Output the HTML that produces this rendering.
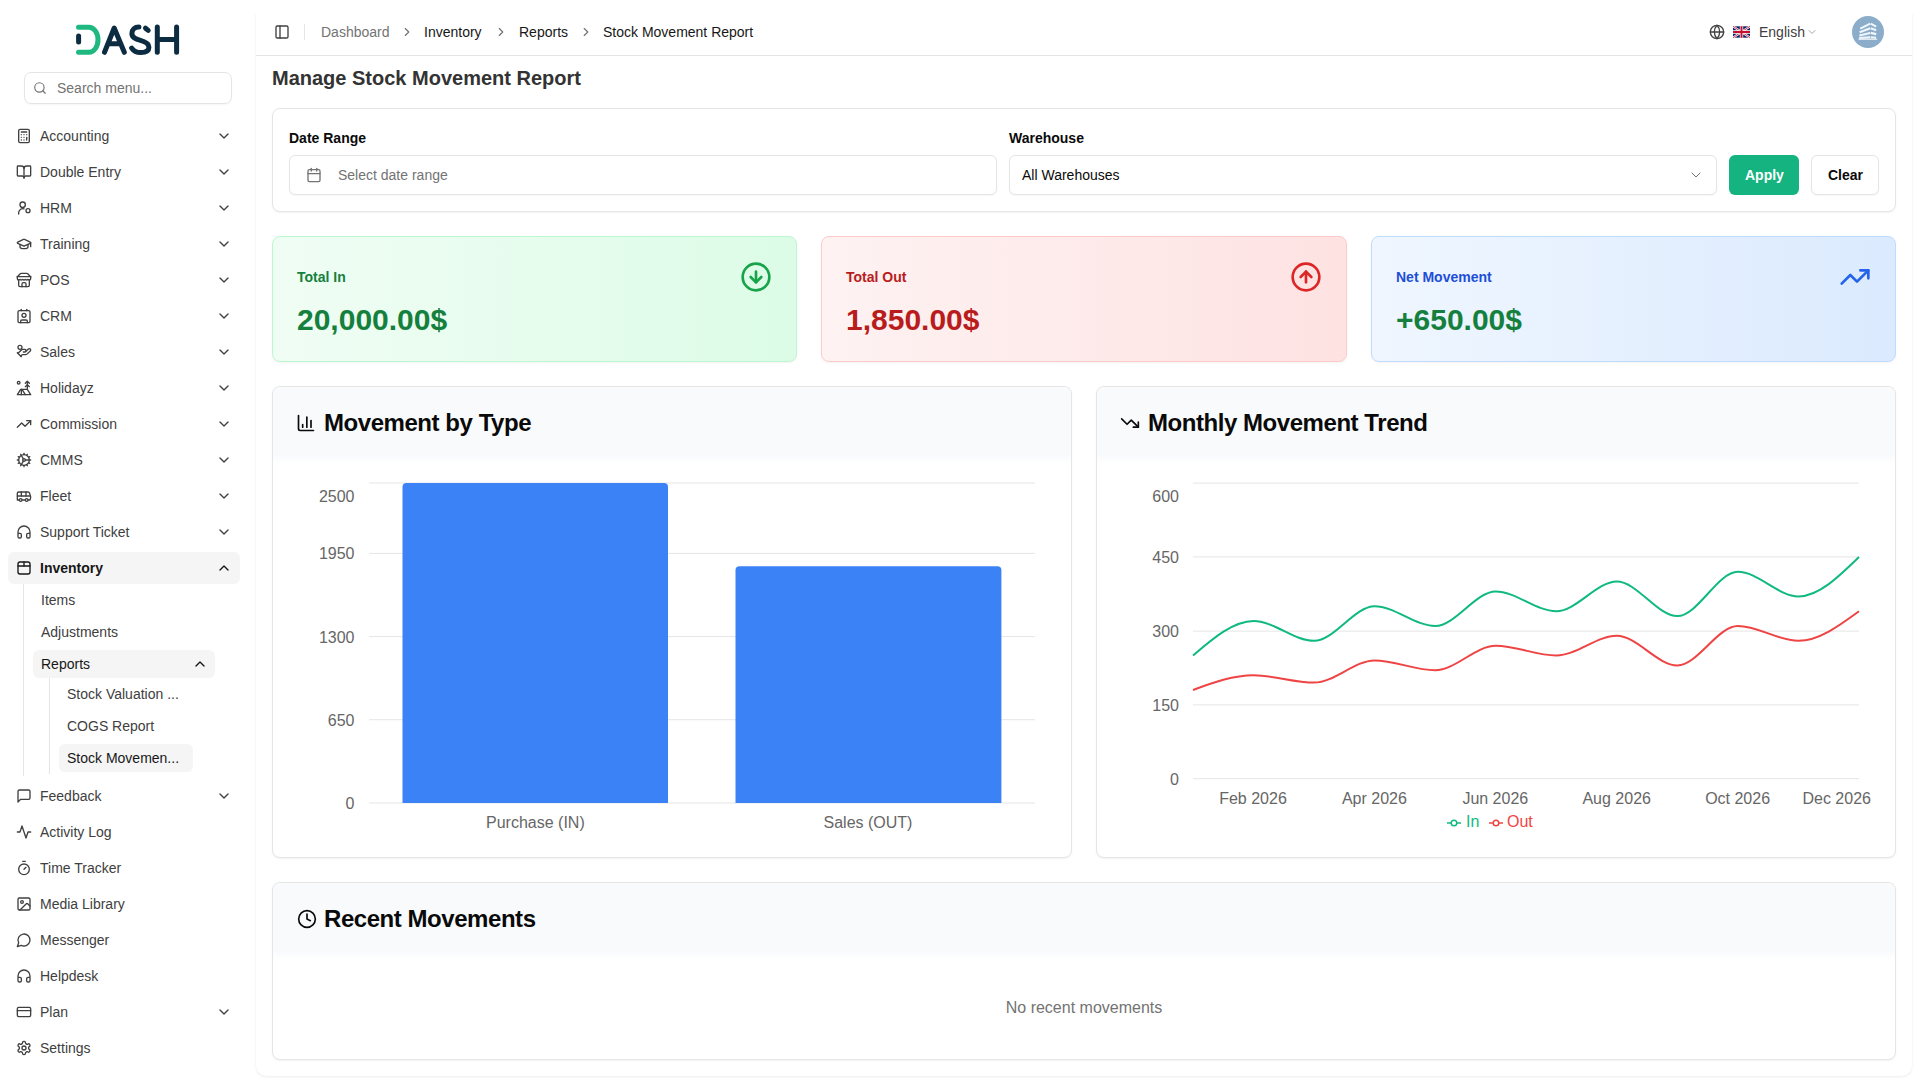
<!DOCTYPE html><html><head><meta charset="utf-8"><style>
*{box-sizing:border-box;margin:0;padding:0}
html,body{width:1920px;height:1080px;overflow:hidden;background:#fff;font-family:"Liberation Sans",sans-serif;color:#0a0a0a}
.abs{position:absolute}
svg{display:block;overflow:visible}
.tx{position:absolute;white-space:nowrap;line-height:1}
.card{position:absolute;border:1px solid #e5e5e5;border-radius:8px;background:#fff;box-shadow:0 1px 2px rgba(0,0,0,.05)}
</style></head><body>
<div class="abs" style="left:0;top:0;width:256px;height:1080px;background:#fff">
<svg class="abs" style="left:70px;top:20px" width="116" height="40" viewBox="70 20 116 40">
<path d="M78.5 27.2 H89 A9 12.55 0 0 1 89 52.3 H78.5" fill="none" stroke="#1fb881" stroke-width="5" stroke-linecap="round"/>
<path d="M78.6 36 V42" fill="none" stroke="#0c2c41" stroke-width="5" stroke-linecap="round"/>
<path d="M104.5 52.3 L114.2 28 L124.3 52.3 M108.2 43.8 H120.8" fill="none" stroke="#0c2c41" stroke-width="5" stroke-linecap="round" stroke-linejoin="round"/>
<g transform="translate(1.3 0)"><path d="M137.6 27.1 C133.3 27.1 130.6 29.7 130.6 33.4 C130.6 37.6 134.3 39 139.2 40.4 C144.6 41.9 147.6 43.8 147.6 47.3 C147.6 51 144.2 52.6 139.4 52.6 C135.3 52.6 132.3 51 130.4 48.1" fill="none" stroke="#0c2c41" stroke-width="5" stroke-linecap="round"/><path d="M144.2 28.2 L146.9 30.4" fill="none" stroke="#0c2c41" stroke-width="5" stroke-linecap="round"/></g>
<path d="M157.3 27 V52.3 M176.6 27 V52.3 M157.3 39.6 H176.6" fill="none" stroke="#0c2c41" stroke-width="5" stroke-linecap="round"/>
</svg>
<div class="abs" style="left:24px;top:72px;width:208px;height:32px;border:1px solid #e5e5e5;border-radius:7px;box-shadow:0 1px 2px rgba(0,0,0,.04)"></div>
<svg class="abs" style="left:33px;top:81px" width="14" height="14" viewBox="0 0 24 24" fill="none" stroke="#737373" stroke-width="2" stroke-linecap="round" stroke-linejoin="round" ><circle cx="11" cy="11" r="8"/><path d="m21 21-4.3-4.3"/></svg>
<div class="tx" style="left:57px;top:81px;font-size:14px;color:#737373">Search menu...</div>
<svg class="abs" style="left:16px;top:128px" width="16" height="16" viewBox="0 0 24 24" fill="none" stroke="#404040" stroke-width="2" stroke-linecap="round" stroke-linejoin="round" ><rect width="16" height="20" x="4" y="2" rx="2"/><line x1="8" x2="16" y1="6" y2="6"/><line x1="16" x2="16" y1="14" y2="18"/><path d="M16 10h.01"/><path d="M12 10h.01"/><path d="M8 10h.01"/><path d="M12 14h.01"/><path d="M8 14h.01"/><path d="M12 18h.01"/><path d="M8 18h.01"/></svg>
<div class="tx" style="left:40px;top:129px;font-size:14px;color:#404040">Accounting</div>
<svg class="abs" style="left:216px;top:128px" width="16" height="16" viewBox="0 0 24 24" fill="none" stroke="#404040" stroke-width="2" stroke-linecap="round" stroke-linejoin="round" ><path d="m6 9 6 6 6-6"/></svg>
<svg class="abs" style="left:16px;top:164px" width="16" height="16" viewBox="0 0 24 24" fill="none" stroke="#404040" stroke-width="2" stroke-linecap="round" stroke-linejoin="round" ><path d="M12 7v14"/><path d="M3 18a1 1 0 0 1-1-1V4a1 1 0 0 1 1-1h5a4 4 0 0 1 4 4 4 4 0 0 1 4-4h5a1 1 0 0 1 1 1v13a1 1 0 0 1-1 1h-6a3 3 0 0 0-3 3 3 3 0 0 0-3-3z"/></svg>
<div class="tx" style="left:40px;top:165px;font-size:14px;color:#404040">Double Entry</div>
<svg class="abs" style="left:216px;top:164px" width="16" height="16" viewBox="0 0 24 24" fill="none" stroke="#404040" stroke-width="2" stroke-linecap="round" stroke-linejoin="round" ><path d="m6 9 6 6 6-6"/></svg>
<svg class="abs" style="left:16px;top:200px" width="16" height="16" viewBox="0 0 24 24" fill="none" stroke="#404040" stroke-width="2" stroke-linecap="round" stroke-linejoin="round" ><circle cx="10" cy="7" r="4"/><path d="M4 21v-2a6 6 0 0 1 8-5.6"/><circle cx="18" cy="16" r="3"/></svg>
<div class="tx" style="left:40px;top:201px;font-size:14px;color:#404040">HRM</div>
<svg class="abs" style="left:216px;top:200px" width="16" height="16" viewBox="0 0 24 24" fill="none" stroke="#404040" stroke-width="2" stroke-linecap="round" stroke-linejoin="round" ><path d="m6 9 6 6 6-6"/></svg>
<svg class="abs" style="left:16px;top:236px" width="16" height="16" viewBox="0 0 24 24" fill="none" stroke="#404040" stroke-width="2" stroke-linecap="round" stroke-linejoin="round" ><path d="M21.42 10.922a1 1 0 0 0-.019-1.838L12.83 5.18a2 2 0 0 0-1.66 0L2.6 9.08a1 1 0 0 0 0 1.832l8.57 3.908a2 2 0 0 0 1.66 0z"/><path d="M22 10v6"/><path d="M6 12.5V16a6 3 0 0 0 12 0v-3.5"/></svg>
<div class="tx" style="left:40px;top:237px;font-size:14px;color:#404040">Training</div>
<svg class="abs" style="left:216px;top:236px" width="16" height="16" viewBox="0 0 24 24" fill="none" stroke="#404040" stroke-width="2" stroke-linecap="round" stroke-linejoin="round" ><path d="m6 9 6 6 6-6"/></svg>
<svg class="abs" style="left:16px;top:272px" width="16" height="16" viewBox="0 0 24 24" fill="none" stroke="#404040" stroke-width="2" stroke-linecap="round" stroke-linejoin="round" ><path d="m2 7 4.41-4.41A2 2 0 0 1 7.83 2h8.34a2 2 0 0 1 1.42.59L22 7"/><path d="M4 12v8a2 2 0 0 0 2 2h12a2 2 0 0 0 2-2v-8"/><path d="M15 22v-4a2 2 0 0 0-2-2h-2a2 2 0 0 0-2 2v4"/><path d="M2 7h20"/><path d="M22 7v3a2 2 0 0 1-2 2a2.7 2.7 0 0 1-1.59-.63.7.7 0 0 0-.82 0A2.7 2.7 0 0 1 16 12a2.7 2.7 0 0 1-1.59-.63.7.7 0 0 0-.82 0A2.7 2.7 0 0 1 12 12a2.7 2.7 0 0 1-1.59-.63.7.7 0 0 0-.82 0A2.7 2.7 0 0 1 8 12a2.7 2.7 0 0 1-1.59-.63.7.7 0 0 0-.82 0A2.7 2.7 0 0 1 4 12a2 2 0 0 1-2-2V7"/></svg>
<div class="tx" style="left:40px;top:273px;font-size:14px;color:#404040">POS</div>
<svg class="abs" style="left:216px;top:272px" width="16" height="16" viewBox="0 0 24 24" fill="none" stroke="#404040" stroke-width="2" stroke-linecap="round" stroke-linejoin="round" ><path d="m6 9 6 6 6-6"/></svg>
<svg class="abs" style="left:16px;top:308px" width="16" height="16" viewBox="0 0 24 24" fill="none" stroke="#404040" stroke-width="2" stroke-linecap="round" stroke-linejoin="round" ><path d="M16 2v2"/><path d="M7 22v-2a2 2 0 0 1 2-2h6a2 2 0 0 1 2 2v2"/><path d="M8 2v2"/><circle cx="12" cy="11" r="3"/><rect x="3" y="4" width="18" height="18" rx="2"/></svg>
<div class="tx" style="left:40px;top:309px;font-size:14px;color:#404040">CRM</div>
<svg class="abs" style="left:216px;top:308px" width="16" height="16" viewBox="0 0 24 24" fill="none" stroke="#404040" stroke-width="2" stroke-linecap="round" stroke-linejoin="round" ><path d="m6 9 6 6 6-6"/></svg>
<svg class="abs" style="left:16px;top:344px" width="16" height="16" viewBox="0 0 24 24" fill="none" stroke="#404040" stroke-width="2" stroke-linecap="round" stroke-linejoin="round" ><circle cx="6" cy="5" r="3"/><path d="M11 12h2a2 2 0 1 0 0-4h-3c-.6 0-1.1.2-1.4.6L3 14"/><path d="m7 18 1.6-1.4c.3-.4.8-.6 1.4-.6h4c1.1 0 2.1-.4 2.8-1.2l4.6-4.4a2 2 0 0 0-2.75-2.91l-4.2 3.9"/><path d="m2 13 6 6"/></svg>
<div class="tx" style="left:40px;top:345px;font-size:14px;color:#404040">Sales</div>
<svg class="abs" style="left:216px;top:344px" width="16" height="16" viewBox="0 0 24 24" fill="none" stroke="#404040" stroke-width="2" stroke-linecap="round" stroke-linejoin="round" ><path d="m6 9 6 6 6-6"/></svg>
<svg class="abs" style="left:16px;top:380px" width="16" height="16" viewBox="0 0 24 24" fill="none" stroke="#404040" stroke-width="2" stroke-linecap="round" stroke-linejoin="round" ><circle cx="4" cy="4" r="2"/><path d="m14 5 3-3 3 3"/><path d="m14 10 3-3 3 3"/><path d="M17 14V2"/><path d="M17 14H7l-5 8h20Z"/><path d="M8 14v8"/><path d="m9 14 5 8"/></svg>
<div class="tx" style="left:40px;top:381px;font-size:14px;color:#404040">Holidayz</div>
<svg class="abs" style="left:216px;top:380px" width="16" height="16" viewBox="0 0 24 24" fill="none" stroke="#404040" stroke-width="2" stroke-linecap="round" stroke-linejoin="round" ><path d="m6 9 6 6 6-6"/></svg>
<svg class="abs" style="left:16px;top:416px" width="16" height="16" viewBox="0 0 24 24" fill="none" stroke="#404040" stroke-width="2" stroke-linecap="round" stroke-linejoin="round" ><polyline points="22 7 13.5 15.5 8.5 10.5 2 17"/><polyline points="16 7 22 7 22 13"/></svg>
<div class="tx" style="left:40px;top:417px;font-size:14px;color:#404040">Commission</div>
<svg class="abs" style="left:216px;top:416px" width="16" height="16" viewBox="0 0 24 24" fill="none" stroke="#404040" stroke-width="2" stroke-linecap="round" stroke-linejoin="round" ><path d="m6 9 6 6 6-6"/></svg>
<svg class="abs" style="left:16px;top:452px" width="16" height="16" viewBox="0 0 24 24" fill="none" stroke="#404040" stroke-width="2" stroke-linecap="round" stroke-linejoin="round" ><path d="M12 20a8 8 0 1 0 0-16 8 8 0 0 0 0 16Z"/><path d="M12 14a2 2 0 1 0 0-4 2 2 0 0 0 0 4Z"/><path d="M12 2v2"/><path d="M12 22v-2"/><path d="m17 20.66-1-1.73"/><path d="M11 10.27 7 3.34"/><path d="m20.66 17-1.73-1"/><path d="m3.34 7 1.73 1"/><path d="M14 12h8"/><path d="M2 12h2"/><path d="m20.66 7-1.73 1"/><path d="m3.34 17 1.73-1"/><path d="m17 3.34-1 1.73"/><path d="m11 13.73-4 6.93"/></svg>
<div class="tx" style="left:40px;top:453px;font-size:14px;color:#404040">CMMS</div>
<svg class="abs" style="left:216px;top:452px" width="16" height="16" viewBox="0 0 24 24" fill="none" stroke="#404040" stroke-width="2" stroke-linecap="round" stroke-linejoin="round" ><path d="m6 9 6 6 6-6"/></svg>
<svg class="abs" style="left:16px;top:488px" width="16" height="16" viewBox="0 0 24 24" fill="none" stroke="#404040" stroke-width="2" stroke-linecap="round" stroke-linejoin="round" ><path d="M8 6v6"/><path d="M15 6v6"/><path d="M2 12h19.6"/><path d="M18 18h3s.5-1.7.8-2.8c.1-.4.2-.8.2-1.2 0-.4-.1-.8-.2-1.2l-1.4-5C20.1 6.8 19.1 6 18 6H4a2 2 0 0 0-2 2v10h3"/><circle cx="7" cy="18" r="2"/><path d="M9 18h5"/><circle cx="16" cy="18" r="2"/></svg>
<div class="tx" style="left:40px;top:489px;font-size:14px;color:#404040">Fleet</div>
<svg class="abs" style="left:216px;top:488px" width="16" height="16" viewBox="0 0 24 24" fill="none" stroke="#404040" stroke-width="2" stroke-linecap="round" stroke-linejoin="round" ><path d="m6 9 6 6 6-6"/></svg>
<svg class="abs" style="left:16px;top:524px" width="16" height="16" viewBox="0 0 24 24" fill="none" stroke="#404040" stroke-width="2" stroke-linecap="round" stroke-linejoin="round" ><path d="M3 14h3a2 2 0 0 1 2 2v3a2 2 0 0 1-2 2H5a2 2 0 0 1-2-2v-7a9 9 0 0 1 18 0v7a2 2 0 0 1-2 2h-1a2 2 0 0 1-2-2v-3a2 2 0 0 1 2-2h3"/></svg>
<div class="tx" style="left:40px;top:525px;font-size:14px;color:#404040">Support Ticket</div>
<svg class="abs" style="left:216px;top:524px" width="16" height="16" viewBox="0 0 24 24" fill="none" stroke="#404040" stroke-width="2" stroke-linecap="round" stroke-linejoin="round" ><path d="m6 9 6 6 6-6"/></svg>
<div class="abs" style="left:8px;top:552px;width:232px;height:32px;background:#f5f5f5;border-radius:6px"></div>
<svg class="abs" style="left:16px;top:560px" width="16" height="16" viewBox="0 0 24 24" fill="none" stroke="#171717" stroke-width="2" stroke-linecap="round" stroke-linejoin="round" ><rect x="3" y="3" width="18" height="18" rx="3"/><path d="M3 9h18"/><path d="M12 3v6"/></svg>
<div class="tx" style="left:40px;top:561px;font-size:14px;font-weight:700;color:#171717">Inventory</div>
<svg class="abs" style="left:216px;top:560px" width="16" height="16" viewBox="0 0 24 24" fill="none" stroke="#171717" stroke-width="2" stroke-linecap="round" stroke-linejoin="round" ><path d="m18 15-6-6-6 6"/></svg>
<div class="abs" style="left:23px;top:584px;width:1px;height:192px;background:#e5e5e5"></div>
<div class="tx" style="left:41px;top:593px;font-size:14px;color:#404040">Items</div>
<div class="tx" style="left:41px;top:625px;font-size:14px;color:#404040">Adjustments</div>
<div class="abs" style="left:33px;top:650px;width:182px;height:28px;background:#f5f5f5;border-radius:6px"></div>
<div class="tx" style="left:41px;top:657px;font-size:14px;color:#171717">Reports</div>
<svg class="abs" style="left:192px;top:656px" width="16" height="16" viewBox="0 0 24 24" fill="none" stroke="#171717" stroke-width="2" stroke-linecap="round" stroke-linejoin="round" ><path d="m18 15-6-6-6 6"/></svg>
<div class="abs" style="left:49px;top:678px;width:1px;height:96px;background:#e5e5e5"></div>
<div class="tx" style="left:67px;top:687px;font-size:14px;color:#404040">Stock Valuation ...</div>
<div class="tx" style="left:67px;top:719px;font-size:14px;color:#404040">COGS Report</div>
<div class="abs" style="left:59px;top:744px;width:134px;height:28px;background:#f5f5f5;border-radius:6px"></div>
<div class="tx" style="left:67px;top:751px;font-size:14px;color:#171717">Stock Movemen...</div>
<svg class="abs" style="left:16px;top:788px" width="16" height="16" viewBox="0 0 24 24" fill="none" stroke="#404040" stroke-width="2" stroke-linecap="round" stroke-linejoin="round" ><path d="M21 15a2 2 0 0 1-2 2H7l-4 4V5a2 2 0 0 1 2-2h14a2 2 0 0 1 2 2z"/></svg>
<div class="tx" style="left:40px;top:789px;font-size:14px;color:#404040">Feedback</div>
<svg class="abs" style="left:216px;top:788px" width="16" height="16" viewBox="0 0 24 24" fill="none" stroke="#404040" stroke-width="2" stroke-linecap="round" stroke-linejoin="round" ><path d="m6 9 6 6 6-6"/></svg>
<svg class="abs" style="left:16px;top:824px" width="16" height="16" viewBox="0 0 24 24" fill="none" stroke="#404040" stroke-width="2" stroke-linecap="round" stroke-linejoin="round" ><path d="M22 12h-4l-3 9L9 3l-3 9H2"/></svg>
<div class="tx" style="left:40px;top:825px;font-size:14px;color:#404040">Activity Log</div>
<svg class="abs" style="left:16px;top:860px" width="16" height="16" viewBox="0 0 24 24" fill="none" stroke="#404040" stroke-width="2" stroke-linecap="round" stroke-linejoin="round" ><line x1="10" x2="14" y1="2" y2="2"/><line x1="12" x2="15" y1="14" y2="11"/><circle cx="12" cy="14" r="8"/></svg>
<div class="tx" style="left:40px;top:861px;font-size:14px;color:#404040">Time Tracker</div>
<svg class="abs" style="left:16px;top:896px" width="16" height="16" viewBox="0 0 24 24" fill="none" stroke="#404040" stroke-width="2" stroke-linecap="round" stroke-linejoin="round" ><rect width="18" height="18" x="3" y="3" rx="2" ry="2"/><circle cx="9" cy="9" r="2"/><path d="m21 15-3.086-3.086a2 2 0 0 0-2.828 0L6 21"/></svg>
<div class="tx" style="left:40px;top:897px;font-size:14px;color:#404040">Media Library</div>
<svg class="abs" style="left:16px;top:932px" width="16" height="16" viewBox="0 0 24 24" fill="none" stroke="#404040" stroke-width="2" stroke-linecap="round" stroke-linejoin="round" ><path d="M7.9 20A9 9 0 1 0 4 16.1L2 22Z"/></svg>
<div class="tx" style="left:40px;top:933px;font-size:14px;color:#404040">Messenger</div>
<svg class="abs" style="left:16px;top:968px" width="16" height="16" viewBox="0 0 24 24" fill="none" stroke="#404040" stroke-width="2" stroke-linecap="round" stroke-linejoin="round" ><path d="M3 14h3a2 2 0 0 1 2 2v3a2 2 0 0 1-2 2H5a2 2 0 0 1-2-2v-7a9 9 0 0 1 18 0v7a2 2 0 0 1-2 2h-1a2 2 0 0 1-2-2v-3a2 2 0 0 1 2-2h3"/></svg>
<div class="tx" style="left:40px;top:969px;font-size:14px;color:#404040">Helpdesk</div>
<svg class="abs" style="left:16px;top:1004px" width="16" height="16" viewBox="0 0 24 24" fill="none" stroke="#404040" stroke-width="2" stroke-linecap="round" stroke-linejoin="round" ><rect width="20" height="14" x="2" y="5" rx="2"/><line x1="2" x2="22" y1="10" y2="10"/></svg>
<div class="tx" style="left:40px;top:1005px;font-size:14px;color:#404040">Plan</div>
<svg class="abs" style="left:216px;top:1004px" width="16" height="16" viewBox="0 0 24 24" fill="none" stroke="#404040" stroke-width="2" stroke-linecap="round" stroke-linejoin="round" ><path d="m6 9 6 6 6-6"/></svg>
<svg class="abs" style="left:16px;top:1040px" width="16" height="16" viewBox="0 0 24 24" fill="none" stroke="#404040" stroke-width="2" stroke-linecap="round" stroke-linejoin="round" ><path d="M12.22 2h-.44a2 2 0 0 0-2 2v.18a2 2 0 0 1-1 1.73l-.43.25a2 2 0 0 1-2 0l-.15-.08a2 2 0 0 0-2.73.73l-.22.38a2 2 0 0 0 .73 2.73l.15.1a2 2 0 0 1 1 1.72v.51a2 2 0 0 1-1 1.74l-.15.09a2 2 0 0 0-.73 2.73l.22.38a2 2 0 0 0 2.73.73l.15-.08a2 2 0 0 1 2 0l.43.25a2 2 0 0 1 1 1.73V20a2 2 0 0 0 2 2h.44a2 2 0 0 0 2-2v-.18a2 2 0 0 1 1-1.73l.43-.25a2 2 0 0 1 2 0l.15.08a2 2 0 0 0 2.73-.73l.22-.39a2 2 0 0 0-.73-2.73l-.15-.08a2 2 0 0 1-1-1.74v-.5a2 2 0 0 1 1-1.74l.15-.09a2 2 0 0 0 .73-2.73l-.22-.38a2 2 0 0 0-2.73-.73l-.15.08a2 2 0 0 1-2 0l-.43-.25a2 2 0 0 1-1-1.73V4a2 2 0 0 0-2-2z"/><circle cx="12" cy="12" r="3"/></svg>
<div class="tx" style="left:40px;top:1041px;font-size:14px;color:#404040">Settings</div>
</div>
<div class="abs" style="left:256px;top:13px;width:1656px;height:1063px;background:#fff;border-radius:0 0 10px 10px;box-shadow:0 1px 3px rgba(0,0,0,.07),0 0 1px rgba(0,0,0,.06)"></div>
<div class="abs" style="left:248px;top:0px;width:1672px;height:13px;background:#fff"></div>
<div class="abs" style="left:256px;top:55px;width:1656px;height:1px;background:#e5e5e5"></div>
<svg class="abs" style="left:274px;top:24px" width="16" height="16" viewBox="0 0 24 24" fill="none" stroke="#404040" stroke-width="2" stroke-linecap="round" stroke-linejoin="round" ><rect width="18" height="18" x="3" y="3" rx="2"/><path d="M9 3v18"/></svg>
<div class="abs" style="left:304px;top:24px;width:1px;height:16px;background:#e5e5e5"></div>
<div class="tx" style="left:321px;top:25px;font-size:14px;color:#737373">Dashboard</div>
<svg class="abs" style="left:400px;top:25px" width="14" height="14" viewBox="0 0 24 24" fill="none" stroke="#737373" stroke-width="2" stroke-linecap="round" stroke-linejoin="round" ><path d="m9 18 6-6-6-6"/></svg>
<div class="tx" style="left:424px;top:25px;font-size:14px;color:#171717">Inventory</div>
<svg class="abs" style="left:494px;top:25px" width="14" height="14" viewBox="0 0 24 24" fill="none" stroke="#737373" stroke-width="2" stroke-linecap="round" stroke-linejoin="round" ><path d="m9 18 6-6-6-6"/></svg>
<div class="tx" style="left:519px;top:25px;font-size:14px;color:#171717">Reports</div>
<svg class="abs" style="left:579px;top:25px" width="14" height="14" viewBox="0 0 24 24" fill="none" stroke="#737373" stroke-width="2" stroke-linecap="round" stroke-linejoin="round" ><path d="m9 18 6-6-6-6"/></svg>
<div class="tx" style="left:603px;top:25px;font-size:14px;color:#171717">Stock Movement Report</div>
<svg class="abs" style="left:1709px;top:24px" width="16" height="16" viewBox="0 0 24 24" fill="none" stroke="#404040" stroke-width="2" stroke-linecap="round" stroke-linejoin="round" ><circle cx="12" cy="12" r="10"/><path d="M12 2a14.5 14.5 0 0 0 0 20 14.5 14.5 0 0 0 0-20"/><path d="M2 12h20"/></svg>
<svg class="abs" style="left:1733px;top:26px" width="17" height="12" viewBox="0 0 60 40">
<rect width="60" height="40" fill="#012169"/>
<path d="M0 0 L60 40 M60 0 L0 40" stroke="#fff" stroke-width="8"/>
<path d="M0 0 L60 40 M60 0 L0 40" stroke="#C8102E" stroke-width="3"/>
<path d="M30 0 V40 M0 20 H60" stroke="#fff" stroke-width="12"/>
<path d="M30 0 V40 M0 20 H60" stroke="#C8102E" stroke-width="7"/>
</svg>
<div class="tx" style="left:1759px;top:25px;font-size:14px;color:#404040">English</div>
<svg class="abs" style="left:1806px;top:26px" width="12" height="12" viewBox="0 0 24 24" fill="none" stroke="#a3a3a3" stroke-width="2" stroke-linecap="round" stroke-linejoin="round" ><path d="m6 9 6 6 6-6"/></svg>
<div class="abs" style="left:1852px;top:16px;width:32px;height:32px;border-radius:50%;background:#8badc9;overflow:hidden">
<svg class="abs" style="left:0;top:0" width="32" height="32" viewBox="0 0 32 32" stroke="#eef6fb" stroke-linecap="butt" fill="none">
<path d="M8.2 12.6 L18.2 7.6 M7.6 16.2 L18.2 12.2 M7.3 19.4 L18.2 16.9 M7.2 22 L18.2 21.4" stroke-width="2.1"/>
<path d="M18.7 7.6 L24.2 10.6 M18.7 12.2 L24.2 14.3 M18.7 16.9 L24.2 18.1 M18.7 21.4 L24.2 21.7" stroke-width="2.1"/>
<path d="M6.5 23.3 H25.2" stroke-width="1"/>
</svg></div>
<div class="tx" style="left:272px;top:68px;font-size:20px;font-weight:700;color:#333">Manage Stock Movement Report</div>
<div class="card" style="left:272px;top:108px;width:1624px;height:104px"></div>
<div class="tx" style="left:289px;top:131px;font-size:14px;font-weight:700;color:#0a0a0a">Date Range</div>
<div class="abs" style="left:289px;top:155px;width:708px;height:40px;border:1px solid #e5e5e5;border-radius:6px;background:#fff;box-shadow:0 1px 2px rgba(0,0,0,.04)"></div>
<svg class="abs" style="left:306px;top:167px" width="16" height="16" viewBox="0 0 24 24" fill="none" stroke="#737373" stroke-width="2" stroke-linecap="round" stroke-linejoin="round" ><rect width="18" height="18" x="3" y="4" rx="2"/><path d="M16 2v4"/><path d="M8 2v4"/><path d="M3 10h18"/></svg>
<div class="tx" style="left:338px;top:168px;font-size:14px;color:#737373">Select date range</div>
<div class="tx" style="left:1009px;top:131px;font-size:14px;font-weight:700;color:#0a0a0a">Warehouse</div>
<div class="abs" style="left:1009px;top:155px;width:708px;height:40px;border:1px solid #e5e5e5;border-radius:6px;background:#fff;box-shadow:0 1px 2px rgba(0,0,0,.04)"></div>
<div class="tx" style="left:1022px;top:168px;font-size:14px;color:#0a0a0a">All Warehouses</div>
<svg class="abs" style="left:1688px;top:167px" width="16" height="16" viewBox="0 0 24 24" fill="none" stroke="#737373" stroke-width="1.5" stroke-linecap="round" stroke-linejoin="round" ><path d="m6 9 6 6 6-6"/></svg>
<div class="abs" style="left:1729px;top:155px;width:70px;height:40px;border-radius:6px;background:#15b37f"></div>
<div class="tx" style="left:1745px;top:168px;font-size:14px;font-weight:700;color:#fff">Apply</div>
<div class="abs" style="left:1811px;top:155px;width:68px;height:40px;border:1px solid #e5e5e5;border-radius:6px;background:#fff;box-shadow:0 1px 2px rgba(0,0,0,.04)"></div>
<div class="tx" style="left:1828px;top:168px;font-size:14px;font-weight:700;color:#0a0a0a">Clear</div>
<div class="abs" style="left:272px;top:236px;width:525px;height:126px;border:1px solid #bbf7d0;border-radius:8px;background:linear-gradient(90deg,#f0fdf4,#dcfce7);box-shadow:0 1px 2px rgba(0,0,0,.05)"></div>
<div class="tx" style="left:297px;top:270px;font-size:14px;font-weight:700;color:#15803d">Total In</div>
<div class="tx" style="left:297px;top:305px;font-size:30px;font-weight:700;color:#15803d">20,000.00$</div>
<svg class="abs" style="left:740px;top:261px" width="32" height="32" viewBox="0 0 24 24" fill="none" stroke="#16a34a" stroke-width="2" stroke-linecap="round" stroke-linejoin="round" ><circle cx="12" cy="12" r="10"/><path d="M12 8v8"/><path d="m8 12 4 4 4-4"/></svg>
<div class="abs" style="left:821px;top:236px;width:526px;height:126px;border:1px solid #fecaca;border-radius:8px;background:linear-gradient(90deg,#fef2f2,#fee2e2);box-shadow:0 1px 2px rgba(0,0,0,.05)"></div>
<div class="tx" style="left:846px;top:270px;font-size:14px;font-weight:700;color:#b91c1c">Total Out</div>
<div class="tx" style="left:846px;top:305px;font-size:30px;font-weight:700;color:#b91c1c">1,850.00$</div>
<svg class="abs" style="left:1290px;top:261px" width="32" height="32" viewBox="0 0 24 24" fill="none" stroke="#dc2626" stroke-width="2" stroke-linecap="round" stroke-linejoin="round" ><circle cx="12" cy="12" r="10"/><path d="m16 12-4-4-4 4"/><path d="M12 16V8"/></svg>
<div class="abs" style="left:1371px;top:236px;width:525px;height:126px;border:1px solid #bfdbfe;border-radius:8px;background:linear-gradient(90deg,#eff6ff,#dbeafe);box-shadow:0 1px 2px rgba(0,0,0,.05)"></div>
<div class="tx" style="left:1396px;top:270px;font-size:14px;font-weight:700;color:#1d4ed8">Net Movement</div>
<div class="tx" style="left:1396px;top:305px;font-size:30px;font-weight:700;color:#15803d">+650.00$</div>
<svg class="abs" style="left:1839px;top:261px" width="32" height="32" viewBox="0 0 24 24" fill="none" stroke="#2563eb" stroke-width="2" stroke-linecap="round" stroke-linejoin="round" ><polyline points="22 7 13.5 15.5 8.5 10.5 2 17"/><polyline points="16 7 22 7 22 13"/></svg>
<div class="card" style="left:272px;top:386px;width:800px;height:472px;overflow:hidden"><div class="abs" style="left:0;top:0;width:100%;height:77px;background:linear-gradient(#f9fafc 0,#f9fafc 68px,#fff 77px)"></div></div>
<svg class="abs" style="left:296px;top:413px" width="20" height="20" viewBox="0 0 24 24" fill="none" stroke="#0a0a0a" stroke-width="2" stroke-linecap="round" stroke-linejoin="round" ><path d="M3 3v16a2 2 0 0 0 2 2h16"/><path d="M18 17V9"/><path d="M13 17V5"/><path d="M8 17v-3"/></svg>
<div class="tx" style="left:324px;top:411px;font-size:24px;font-weight:700;letter-spacing:-0.45px;color:#0a0a0a">Movement by Type</div>
<div class="card" style="left:1096px;top:386px;width:800px;height:472px;overflow:hidden"><div class="abs" style="left:0;top:0;width:100%;height:77px;background:linear-gradient(#f9fafc 0,#f9fafc 68px,#fff 77px)"></div></div>
<svg class="abs" style="left:1120px;top:413px" width="20" height="20" viewBox="0 0 24 24" fill="none" stroke="#0a0a0a" stroke-width="2" stroke-linecap="round" stroke-linejoin="round" ><polyline points="22 17 13.5 8.5 8.5 13.5 2 7"/><polyline points="16 17 22 17 22 11"/></svg>
<div class="tx" style="left:1148px;top:411px;font-size:24px;font-weight:700;letter-spacing:-0.45px;color:#0a0a0a">Monthly Movement Trend</div>
<svg class="abs" style="left:0;top:0" width="1920" height="1080"><line x1="369" x2="1035" y1="483" y2="483" stroke="#e5e5e5" stroke-width="1"/><line x1="369" x2="1035" y1="553.4" y2="553.4" stroke="#e5e5e5" stroke-width="1"/><line x1="369" x2="1035" y1="636.6" y2="636.6" stroke="#e5e5e5" stroke-width="1"/><line x1="369" x2="1035" y1="719.7" y2="719.7" stroke="#e5e5e5" stroke-width="1"/><line x1="369" x2="1035" y1="803" y2="803" stroke="#e5e5e5" stroke-width="1"/><path d="M402.5 803 V487 a4 4 0 0 1 4 -4 H664 a4 4 0 0 1 4 4 V803 Z" fill="#3b82f6"/><path d="M735.5 803 V570.3 a4 4 0 0 1 4 -4 H997.4 a4 4 0 0 1 4 4 V803 Z" fill="#3b82f6"/><line x1="1193" x2="1859" y1="483.1" y2="483.1" stroke="#e5e5e5" stroke-width="1"/><line x1="1193" x2="1859" y1="556.9" y2="556.9" stroke="#e5e5e5" stroke-width="1"/><line x1="1193" x2="1859" y1="631.1" y2="631.1" stroke="#e5e5e5" stroke-width="1"/><line x1="1193" x2="1859" y1="704.9" y2="704.9" stroke="#e5e5e5" stroke-width="1"/><line x1="1193" x2="1859" y1="778.7" y2="778.7" stroke="#e5e5e5" stroke-width="1"/><path d="M1193.0,655.5 C1213.2,638.3 1233.4,621.0 1253.5,621.0 C1273.7,621.0 1293.9,640.8 1314.1,640.8 C1334.3,640.8 1354.5,606.3 1374.6,606.3 C1394.8,606.3 1415.0,626.0 1435.2,626.0 C1455.4,626.0 1475.5,591.5 1495.7,591.5 C1515.9,591.5 1536.1,611.2 1556.3,611.2 C1576.5,611.2 1596.6,581.6 1616.8,581.6 C1637.0,581.6 1657.2,616.1 1677.4,616.1 C1697.5,616.1 1717.7,571.8 1737.9,571.8 C1758.1,571.8 1778.3,596.4 1798.5,596.4 C1818.6,596.4 1838.8,576.7 1859.0,557.0" fill="none" stroke="#10b981" stroke-width="2"/><path d="M1193.0,690.0 C1213.2,682.6 1233.4,675.2 1253.5,675.2 C1273.7,675.2 1293.9,682.6 1314.1,682.6 C1334.3,682.6 1354.5,660.5 1374.6,660.5 C1394.8,660.5 1415.0,670.3 1435.2,670.3 C1455.4,670.3 1475.5,645.7 1495.7,645.7 C1515.9,645.7 1536.1,655.5 1556.3,655.5 C1576.5,655.5 1596.6,635.8 1616.8,635.8 C1637.0,635.8 1657.2,665.4 1677.4,665.4 C1697.5,665.4 1717.7,626.0 1737.9,626.0 C1758.1,626.0 1778.3,640.8 1798.5,640.8 C1818.6,640.8 1838.8,626.0 1859.0,611.2" fill="none" stroke="#ef4444" stroke-width="2"/><path d="M1447 823 H1461" stroke="#10b981" stroke-width="1.5"/><circle cx="1454" cy="823" r="2.8" fill="#fff" stroke="#10b981" stroke-width="1.5"/><path d="M1489 823 H1503" stroke="#ef4444" stroke-width="1.5"/><circle cx="1496" cy="823" r="2.8" fill="#fff" stroke="#ef4444" stroke-width="1.5"/></svg>
<div class="tx" style="left:254.5px;width:100px;text-align:right;top:488.6px;font-size:16px;color:#666">2500</div>
<div class="tx" style="left:254.5px;width:100px;text-align:right;top:546.4px;font-size:16px;color:#666">1950</div>
<div class="tx" style="left:254.5px;width:100px;text-align:right;top:629.6px;font-size:16px;color:#666">1300</div>
<div class="tx" style="left:254.5px;width:100px;text-align:right;top:712.7px;font-size:16px;color:#666">650</div>
<div class="tx" style="left:254.5px;width:100px;text-align:right;top:796px;font-size:16px;color:#666">0</div>
<div class="tx" style="left:435.4px;width:200px;text-align:center;top:815.4px;font-size:16px;color:#666">Purchase (IN)</div>
<div class="tx" style="left:768px;width:200px;text-align:center;top:815.4px;font-size:16px;color:#666">Sales (OUT)</div>
<div class="tx" style="left:1079px;width:100px;text-align:right;top:488.6px;font-size:16px;color:#666">600</div>
<div class="tx" style="left:1079px;width:100px;text-align:right;top:549.9px;font-size:16px;color:#666">450</div>
<div class="tx" style="left:1079px;width:100px;text-align:right;top:624.1px;font-size:16px;color:#666">300</div>
<div class="tx" style="left:1079px;width:100px;text-align:right;top:697.9px;font-size:16px;color:#666">150</div>
<div class="tx" style="left:1079px;width:100px;text-align:right;top:771.7px;font-size:16px;color:#666">0</div>
<div class="tx" style="left:1153px;width:200px;text-align:center;top:790.8px;font-size:16px;color:#666">Feb 2026</div>
<div class="tx" style="left:1274.4px;width:200px;text-align:center;top:790.8px;font-size:16px;color:#666">Apr 2026</div>
<div class="tx" style="left:1395.3px;width:200px;text-align:center;top:790.8px;font-size:16px;color:#666">Jun 2026</div>
<div class="tx" style="left:1516.7px;width:200px;text-align:center;top:790.8px;font-size:16px;color:#666">Aug 2026</div>
<div class="tx" style="left:1637.6px;width:200px;text-align:center;top:790.8px;font-size:16px;color:#666">Oct 2026</div>
<div class="tx" style="left:1736.7px;width:200px;text-align:center;top:790.8px;font-size:16px;color:#666">Dec 2026</div>
<div class="tx" style="left:1466px;top:814px;font-size:16px;color:#10b981">In</div>
<div class="tx" style="left:1507px;top:814px;font-size:16px;color:#ef4444">Out</div>
<div class="card" style="left:272px;top:882px;width:1624px;height:178px;overflow:hidden;background:#fff"><div class="abs" style="left:0;top:0;width:100%;height:75px;background:linear-gradient(#f9fafc 0,#f9fafc 68px,#fff 76px)"></div></div>
<svg class="abs" style="left:297px;top:909px" width="20" height="20" viewBox="0 0 24 24" fill="none" stroke="#0a0a0a" stroke-width="2" stroke-linecap="round" stroke-linejoin="round" ><circle cx="12" cy="12" r="10"/><polyline points="12 6 12 12 16 14"/></svg>
<div class="tx" style="left:324px;top:907px;font-size:24px;font-weight:700;letter-spacing:-0.45px;color:#0a0a0a">Recent Movements</div>
<div class="tx" style="left:884px;width:400px;text-align:center;top:1000px;font-size:16px;color:#737373">No recent movements</div>
</body></html>
